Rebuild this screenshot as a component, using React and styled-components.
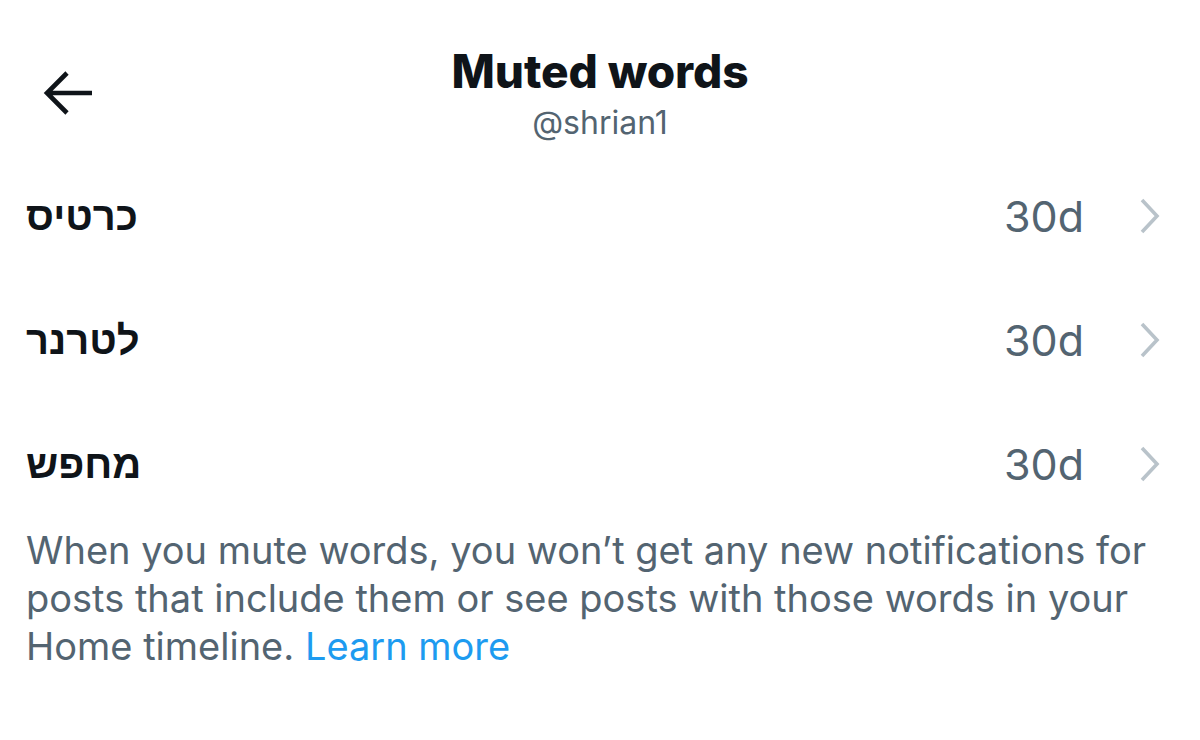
import React from "react";
import styled, { createGlobalStyle } from "styled-components";

const GlobalStyle = createGlobalStyle`
  html, body {
    margin: 0;
    padding: 0;
    background: #ffffff;
  }
  body {
    font-family: Inter, "Liberation Sans", sans-serif;
    color: #0f1419;
  }
`;

const Page = styled.div`
  width: 1200px;
  height: 740px;
  background: #ffffff;
  overflow: hidden;
`;

const Header = styled.header`
  display: grid;
  grid-template-columns: 1fr auto 1fr;
  align-items: center;
  height: 154px;
  box-sizing: border-box;
  padding: 44px 0 13px;
`;

const BackButton = styled.button`
  justify-self: start;
  display: flex;
  align-items: center;
  justify-content: center;
  margin-left: 42px;
  padding: 0;
  width: 52px;
  height: 44px;
  border: none;
  background: none;
  color: #0f1419;
  cursor: pointer;
`;

const TitleBlock = styled.div`
  display: flex;
  flex-direction: column;
  align-items: center;
  gap: 6px;
`;

const Title = styled.h1`
  margin: 0;
  font-size: 46px;
  line-height: 54px;
  font-weight: 800;
  letter-spacing: -0.1px;
  color: #0f1419;
`;

const Handle = styled.div`
  font-size: 32px;
  line-height: 38px;
  color: #536471;
`;

const List = styled.ul`
  list-style: none;
  margin: 0;
  padding: 0;
`;

const Row = styled.li`
  display: flex;
  align-items: center;
  height: 124px;
  padding: 0 38px 0 26px;
  cursor: pointer;
`;

const Word = styled.span`
  flex: 1;
  text-align: left;
  font-family: "Liberation Sans", "DejaVu Sans", sans-serif;
  font-size: 40px;
  font-weight: 700;
  color: #0f1419;
`;

const Duration = styled.span`
  font-size: 43px;
  color: #536471;
  margin-right: 54px;
`;

const Note = styled.p`
  margin: 0;
  padding: 0 40px 0 26px;
  font-size: 38px;
  line-height: 48px;
  color: #536471;
`;

const LearnMore = styled.a`
  color: #1d9bf0;
  text-decoration: none;
`;

const ArrowIcon = () => (
  <svg width="52" height="44" viewBox="0 0 52 44" fill="none">
    <path
      d="M50 22H5M25 2L5 22l20 20"
      stroke="currentColor"
      strokeWidth="4.6"
      strokeLinecap="butt"
      strokeLinejoin="miter"
    />
  </svg>
);

const Chevron = () => (
  <svg width="24" height="38" viewBox="0 0 24 38" fill="none">
    <path
      d="M4 3l15 16L4 35"
      stroke="#b9c3ca"
      strokeWidth="3.6"
      strokeLinecap="butt"
      strokeLinejoin="miter"
    />
  </svg>
);

const words = [
  { word: "כרטיס", duration: "30d" },
  { word: "לטרנר", duration: "30d" },
  { word: "מחפש", duration: "30d" },
];

export default function App() {
  return (
    <Page>
      <GlobalStyle />
      <Header>
        <BackButton aria-label="Back">
          <ArrowIcon />
        </BackButton>
        <TitleBlock>
          <Title>Muted words</Title>
          <Handle>@shrian1</Handle>
        </TitleBlock>
        <div />
      </Header>
      <List>
        {words.map((w) => (
          <Row key={w.word}>
            <Word>
              <bdi>{w.word}</bdi>
            </Word>
            <Duration>{w.duration}</Duration>
            <Chevron />
          </Row>
        ))}
      </List>
      <Note>
        When you mute words, you won’t get any new notifications for posts that
        include them or see posts with those words in your Home timeline.{" "}
        <LearnMore href="#">Learn more</LearnMore>
      </Note>
    </Page>
  );
}
